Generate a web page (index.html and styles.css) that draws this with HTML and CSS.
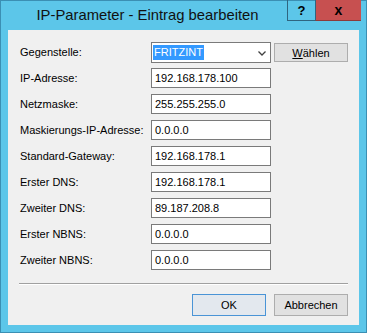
FILE: index.html
```html
<!DOCTYPE html>
<html lang="de">
<head>
<meta charset="UTF-8">
<title>IP-Parameter - Eintrag bearbeiten</title>
<link rel="stylesheet" href="styles.css">
</head>
<body>
<div class="window">
    <div class="titlebar">
        <div class="title">IP-Parameter - Eintrag bearbeiten</div>
        <div class="controls">
            <div class="ctl help">?</div>
            <div class="ctl close">x</div>
        </div>
    </div>
    <div class="client">
        <div class="fields">
            <label>Gegenstelle:</label>
            <div class="combo">
                <span class="sel">FRITZINT</span>
                <svg class="arrow" width="8" height="5" viewBox="0 0 8 5"><polyline points="0.5,0.5 4,4 7.5,0.5" fill="none" stroke="#404040" stroke-width="1.3"/></svg>
            </div>
            <button class="btn pick"><u>W</u>ählen</button>

            <label>IP-Adresse:</label>
            <div class="input">192.168.178.100</div>
            <span></span>

            <label>Netzmaske:</label>
            <div class="input">255.255.255.0</div>
            <span></span>

            <label>Maskierungs-IP-Adresse:</label>
            <div class="input">0.0.0.0</div>
            <span></span>

            <label>Standard-Gateway:</label>
            <div class="input">192.168.178.1</div>
            <span></span>

            <label>Erster DNS:</label>
            <div class="input">192.168.178.1</div>
            <span></span>

            <label>Zweiter DNS:</label>
            <div class="input">89.187.208.8</div>
            <span></span>

            <label>Erster NBNS:</label>
            <div class="input">0.0.0.0</div>
            <span></span>

            <label>Zweiter NBNS:</label>
            <div class="input">0.0.0.0</div>
            <span></span>
        </div>
        <div class="separator"></div>
        <div class="actions">
            <button class="btn default">OK</button>
            <button class="btn">Abbrechen</button>
        </div>
    </div>
</div>
</body>
</html>
```

FILE: styles.css
```css
html, body {
    margin: 0;
    padding: 0;
}
body {
    font-family: "Liberation Sans", Arial, sans-serif;
    font-size: 11px;
    color: #000;
    background: #fff;
}
.window {
    width: 367px;
    height: 333px;
    box-sizing: border-box;
    border: 1px solid #3b8fb3;
    background-color: #5cc6e9;
    display: flex;
    flex-direction: column;
}
.titlebar {
    height: 29px;
    display: flex;
    align-items: flex-start;
}
.title {
    flex: 1;
    text-align: center;
    padding-left: 7px;
    font-size: 14.8px;
    line-height: 28px;
    color: #111;
}
.controls {
    display: flex;
    margin-right: 5px;
    margin-top: -1px;
}
.ctl {
    height: 21px;
    box-sizing: border-box;
    display: flex;
    align-items: center;
    justify-content: center;
    font-weight: bold;
    font-size: 13px;
}
.help {
    width: 28px;
    border: 1px solid #2f6580;
    border-top: none;
    border-right: none;
}
.close {
    width: 46px;
    background-color: #c75050;
    border-left: 1px solid #2f6580;
    border-bottom: 1px solid #8d3a3a;
    font-size: 14px;
}
.client {
    flex: 1;
    margin: 0 7px 7px 7px;
    background-color: #f0f0f0;
    padding: 12px 11px 9px 11px;
    display: flex;
    flex-direction: column;
}
.fields {
    display: grid;
    grid-template-columns: 131px 120px 74px;
    grid-auto-rows: 20px;
    row-gap: 6px;
    column-gap: 0;
    padding-left: 1px;
}
.fields label {
    align-self: center;
    color: #000;
}
.input, .combo {
    box-sizing: border-box;
    height: 20px;
    border: 1px solid #7a7a7a;
    background-color: #fff;
    padding-left: 3px;
    line-height: 18px;
    font-size: 11px;
}
.combo {
    height: 21px;
    padding-left: 1px;
    display: flex;
    align-items: center;
}
.sel {
    background-color: #3399ff;
    color: #fff;
    padding: 1px 1px;
    line-height: 13px;
}
.arrow {
    margin-left: auto;
    margin-right: 4px;
    margin-top: 1px;
}
.btn {
    font-family: "Liberation Sans", Arial, sans-serif;
    font-size: 11px;
    width: 74px;
    height: 22px;
    box-sizing: border-box;
    border: 1px solid #adadad;
    background-color: #e1e1e1;
    color: #000;
    padding: 0;
}
.pick {
    height: 19px;
    margin-top: 1px;
    margin-left: 3px;
}
.separator {
    margin-top: 13px;
    border-top: 1px solid #a0a0a0;
    border-bottom: 1px solid #fff;
}
.actions {
    margin-top: 9px;
    display: flex;
    justify-content: flex-end;
    gap: 8px;
}
.btn.default {
    border-color: #4a94d6;
    background-color: #e3e8ee;
}
```
